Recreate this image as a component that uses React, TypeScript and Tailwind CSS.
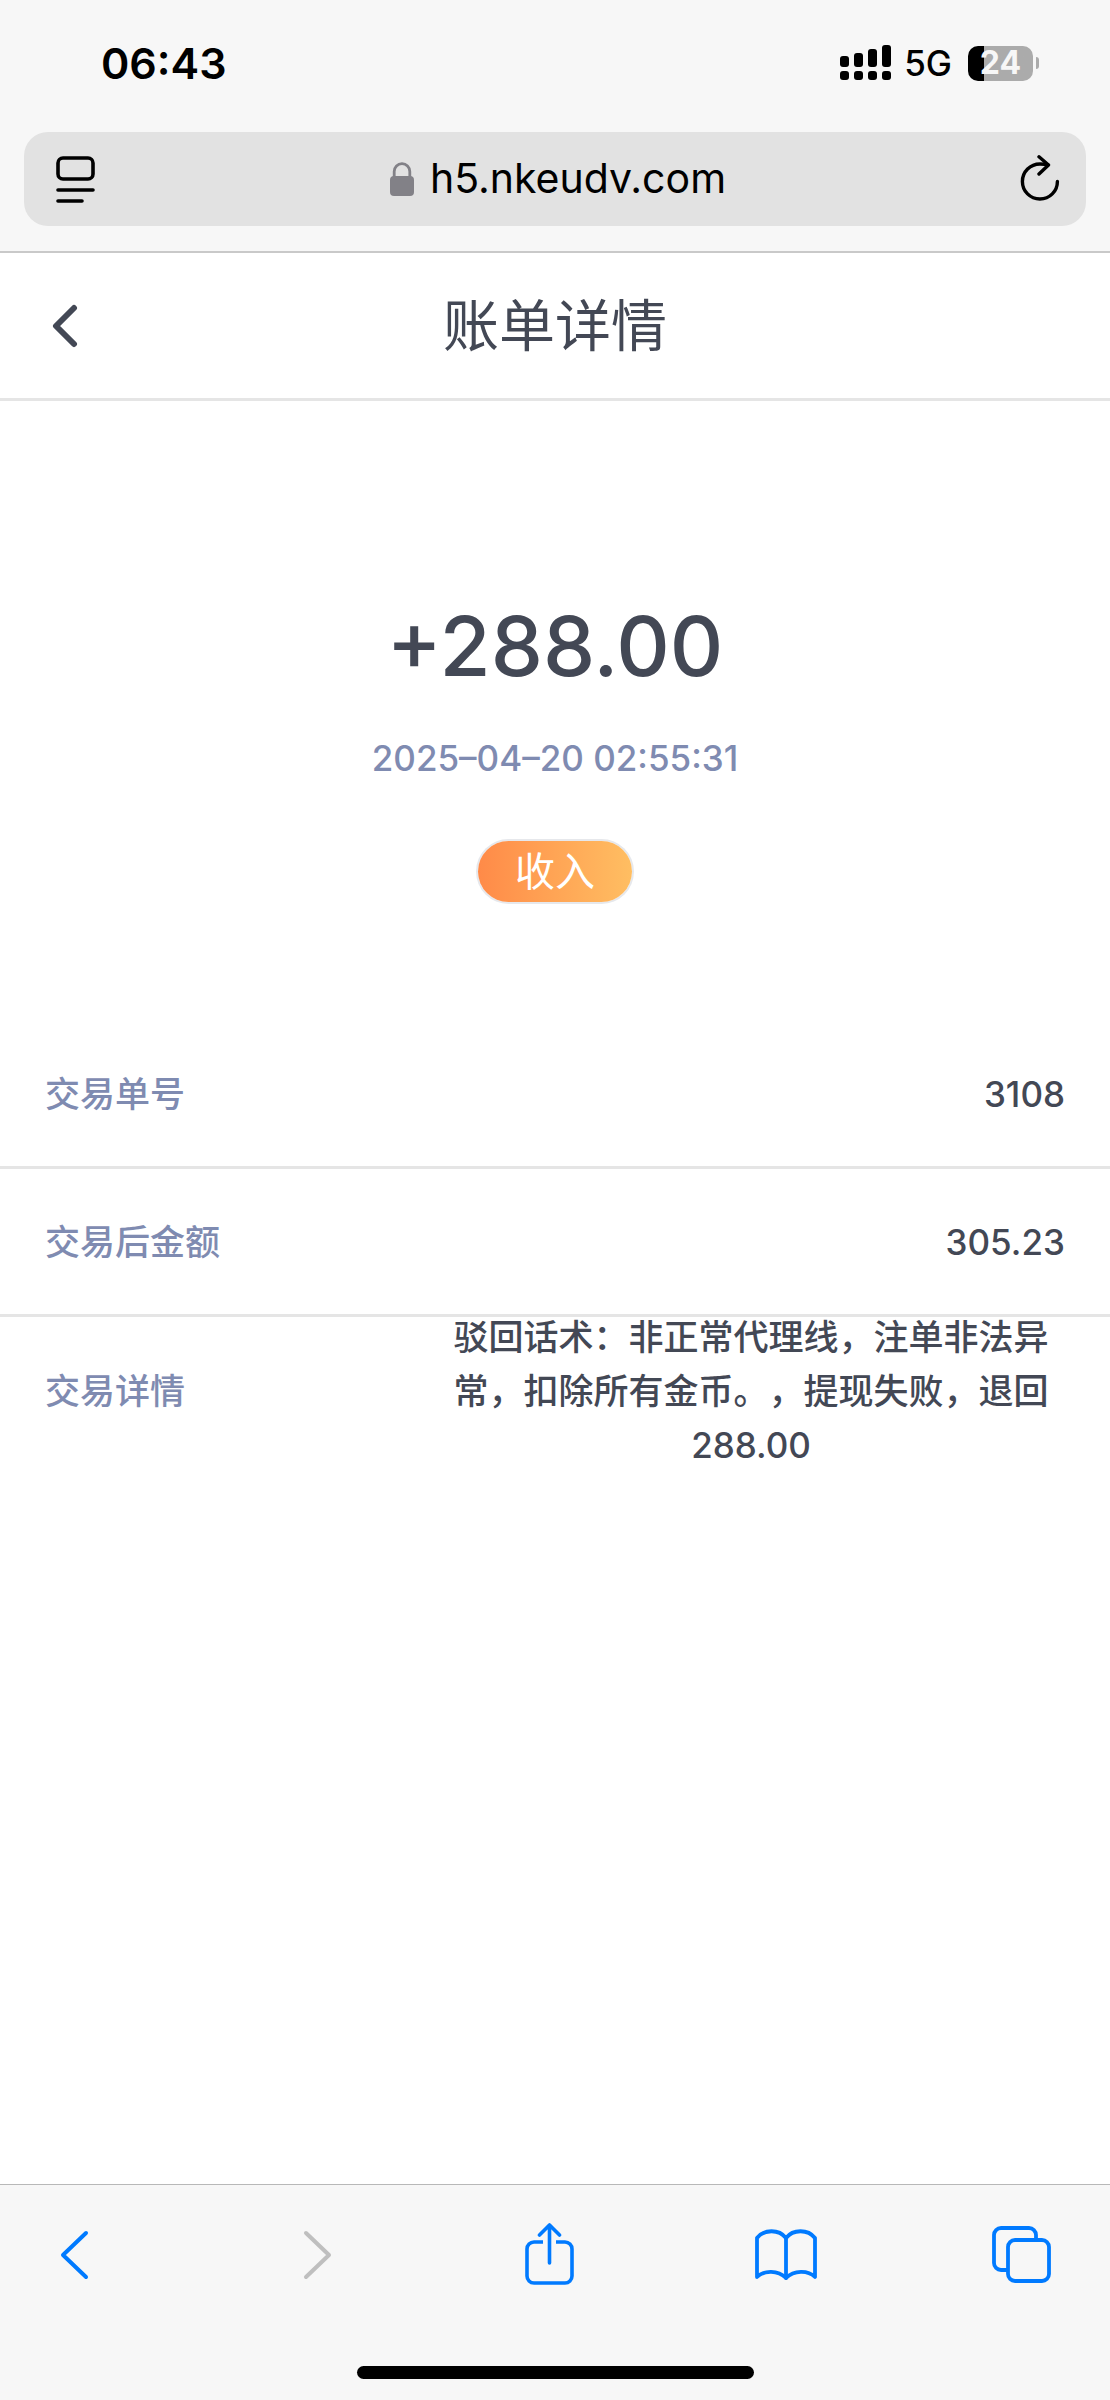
import React from 'react';

const records = [
  { label: '交易单号', value: '3108' },
  { label: '交易后金额', value: '305.23' },
  {
    label: '交易详情',
    value: '驳回话术：非正常代理线，注单非法异常，扣除所有金币。，提现失败，退回288.00',
  },
];

const SignalIcon = () => (
  <svg width="52" height="36" viewBox="0 0 52 36" fill="currentColor" aria-hidden="true">
    <rect x="0" y="11" width="9" height="11" rx="3" />
    <rect x="14" y="8" width="9" height="14" rx="3" />
    <rect x="28" y="4" width="9" height="18" rx="3" />
    <rect x="42" y="0" width="9" height="22" rx="3" />
    <rect x="0" y="26" width="9" height="9" rx="3" />
    <rect x="14" y="26" width="9" height="9" rx="3" />
    <rect x="28" y="26" width="9" height="9" rx="3" />
    <rect x="42" y="26" width="9" height="9" rx="3" />
  </svg>
);

const ReaderIcon = () => (
  <svg width="40" height="48" viewBox="0 0 40 48" fill="none" stroke="currentColor" strokeWidth="3.6" strokeLinecap="round" aria-hidden="true">
    <rect x="2" y="3" width="35" height="21" rx="5" />
    <path d="M2 35h35M2 46h24" />
  </svg>
);

const LockIcon = () => (
  <svg width="24" height="34" viewBox="0 0 24 34" aria-hidden="true">
    <rect x="0" y="14" width="24" height="20" rx="4" fill="#828187" />
    <path d="M4.2 15V9.5a7.8 7.8 0 0 1 15.6 0V15" fill="none" stroke="#828187" strokeWidth="2.8" />
  </svg>
);

const ReloadIcon = () => (
  <svg width="40" height="48" viewBox="0 0 40 48" fill="none" stroke="currentColor" strokeWidth="3.4" strokeLinecap="round" strokeLinejoin="round" aria-hidden="true">
    <path d="M37.4 26.400A17.5 17.5 0 1 1 20 9c3.400 0 6 .3 8 .8" />
    <path d="M19 1.800 28.500 10 19 19" />
  </svg>
);

const BackIcon = () => (
  <svg width="60" height="60" viewBox="0 0 60 60" fill="none" stroke="currentColor" strokeWidth="4" strokeLinecap="round" strokeLinejoin="round" aria-hidden="true">
    <path d="M41 8 18 30l23 22" />
  </svg>
);

const ForwardIcon = () => (
  <svg width="60" height="60" viewBox="0 0 60 60" fill="none" stroke="currentColor" strokeWidth="4" strokeLinecap="round" strokeLinejoin="round" aria-hidden="true">
    <path d="m24 8 23 22-23 22" />
  </svg>
);

const ShareIcon = () => (
  <svg width="60" height="64" viewBox="0 0 60 64" fill="none" stroke="currentColor" strokeWidth="3.6" strokeLinecap="round" strokeLinejoin="round" aria-hidden="true">
    <path d="M24 19h-9a7 7 0 0 0-7 7v27a7 7 0 0 0 7 7h31a7 7 0 0 0 7-7V26a7 7 0 0 0-7-7h-9" strokeLinecap="butt" />
    <path d="M30.5 40V2M20.5 12l10-10 10 10" />
  </svg>
);

const BookIcon = () => (
  <svg width="64" height="60" viewBox="0 0 64 60" fill="none" stroke="currentColor" strokeWidth="3.8" strokeLinecap="round" strokeLinejoin="round" aria-hidden="true">
    <path d="M33 13C26 4 11 4 4 13v39c7-7 21-7 29 1 8-8 22-8 29-1V13C55 4 40 4 33 13z" />
    <path d="M33 13v40" />
  </svg>
);

const TabsIcon = () => (
  <svg width="60" height="60" viewBox="0 0 60 60" fill="none" stroke="currentColor" strokeWidth="3.8" aria-hidden="true">
    <rect x="16" y="15" width="41" height="41" rx="7" />
    <path d="M15 45H9a7 7 0 0 1-7-7V10a7 7 0 0 1 7-7h28a7 7 0 0 1 7 7v4" />
  </svg>
);

const toolbar = [
  { label: '后退', icon: BackIcon, disabled: false },
  { label: '前进', icon: ForwardIcon, disabled: true },
  { label: '共享', icon: ShareIcon, disabled: false },
  { label: '书签', icon: BookIcon, disabled: false },
  { label: '标签页', icon: TabsIcon, disabled: false },
];

const StatusBar = () => (
  <div className="flex h-[132px] items-center justify-between pr-[71px] pb-1.5 pl-[101px] text-black">
    <time className="text-[43px] font-semibold">06:43</time>
    <div className="flex items-center">
      <SignalIcon />
      <span className="ml-3 text-[35px] font-medium">5G</span>
      <div className="ml-4 flex h-[35px] w-[65px] items-center justify-center rounded-[10px] bg-linear-to-r from-black from-25% to-[#ababab] to-25% text-[32px] font-bold text-[#f7f7f7]">
        24
      </div>
      <span className="ml-[3px] h-3 w-[3px] rounded-r-full bg-[#ababab]" />
    </div>
  </div>
);

const AddressBar = () => (
  <div className="mx-6 mb-[25px] flex h-[94px] items-center justify-between rounded-[24px] bg-[#e2e2e2] pr-[26px] pl-8 text-black">
    <button type="button" aria-label="阅读器">
      <ReaderIcon />
    </button>
    <div className="flex items-center gap-4 text-[41px]">
      <LockIcon />
      <span>h5.nkeudv.com</span>
    </div>
    <button type="button" aria-label="重新载入">
      <ReloadIcon />
    </button>
  </div>
);

const App = () => {
  return (
    <div className="flex min-h-screen flex-col bg-white font-['Inter','Noto_Sans_CJK_SC',sans-serif] text-[#434855]">
      <div className="border-b-2 border-[#c9c9c9] bg-[#f7f7f7]">
        <StatusBar />
        <AddressBar />
      </div>

      <header className="grid h-[148px] grid-cols-[1fr_auto_1fr] items-center border-b-3 border-[#e5e5e5] px-[49px]">
        <button type="button" aria-label="返回" className="justify-self-start">
          <svg width="30" height="44" viewBox="0 0 30 44" fill="none" stroke="currentColor" strokeWidth="6" strokeLinecap="round" strokeLinejoin="round" aria-hidden="true">
            <path d="M25 4 7 22l18 18" />
          </svg>
        </button>
        <h1 className="text-[56px]">账单详情</h1>
      </header>

      <main className="flex-1">
        <section className="flex flex-col items-center pt-[195px] pb-[119px]">
          <p className="text-[83px] leading-[100px] font-medium">+288.00</p>
          <p className="mt-9 text-[35px] leading-[52px] font-medium text-[#7f8bb1]">2025–04–20 02:55:31</p>
          <span className="mt-[57px] flex h-[61px] w-[154px] items-center justify-center rounded-full bg-linear-to-r from-[#ff8a48] to-[#ffbe62] text-[40px] text-white ring-2 ring-[#e6e8ec]">
            收入
          </span>
        </section>

        <dl className="text-[35px] leading-[54px] font-medium">
          {records.map((record) => (
            <div
              key={record.label}
              className="flex h-[148px] items-center justify-between border-b-3 border-[#e5e5e5] px-[45px] last:border-b-0"
            >
              <dt className="text-[#7f8bb1]">{record.label}</dt>
              <dd className="max-w-[628px] text-center [text-spacing-trim:space-all]">{record.value}</dd>
            </div>
          ))}
        </dl>
      </main>

      <footer className="border-t border-[#b8b8b8] bg-[#f7f7f7]">
        <nav className="flex h-[139px] items-center justify-between pr-[56px] pl-[43px] text-[#007aff]">
          {toolbar.map((item) => (
            <button
              key={item.label}
              type="button"
              aria-label={item.label}
              disabled={item.disabled}
              className="flex size-16 items-center justify-center disabled:text-[#bfbfbf]"
            >
              <item.icon />
            </button>
          ))}
        </nav>
        <div className="mx-auto mt-[42px] mb-[21px] h-[13px] w-[397px] rounded-full bg-black" />
      </footer>
    </div>
  );
};

export default App;
